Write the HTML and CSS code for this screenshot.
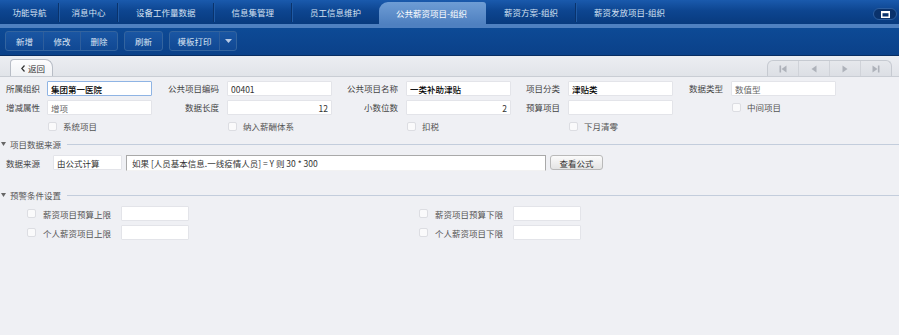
FILE: index.html
```html
<!DOCTYPE html>
<html lang="zh-CN">
<head>
    <meta charset="UTF-8">
    <title>公共薪资项目-组织</title>
    <link rel="stylesheet" href="styles.css">
</head>
<body>

    <!-- 顶部页签 -->
    <div class="tabbar">
        <div class="tabs">
            <div class="tab sm sep">功能导航</div>
            <div class="tab sm sep">消息中心</div>
            <div class="tab sep">设备工作量数据</div>
            <div class="tab sep">信息集管理</div>
            <div class="tab">员工信息维护</div>
            <div class="tab active">公共薪资项目-组织</div>
            <div class="tab sep">薪资方案-组织</div>
            <div class="tab">薪资发放项目-组织</div>
        </div>
        <div class="winbtn">
            <svg width="9" height="7" viewBox="0 0 9 7"><rect x="0.75" y="0.75" width="7.5" height="5.5" fill="none" stroke="#fff" stroke-width="1.5"/><rect x="0" y="0" width="9" height="2.2" fill="#fff"/></svg>
        </div>
    </div>

    <!-- 工具栏 -->
    <div class="toolbar">
        <div class="btngroup">
            <button class="tbtn">新增</button>
            <button class="tbtn">修改</button>
            <button class="tbtn">删除</button>
        </div>
        <div class="btngroup">
            <button class="tbtn">刷新</button>
        </div>
        <div class="btngroup">
            <button class="tbtn wide">模板打印</button>
            <button class="tbtn drop">
                <svg width="7" height="4" viewBox="0 0 7 4"><path d="M0 0h7L3.5 4z" fill="#b9cbe6"/></svg>
            </button>
        </div>
    </div>

    <!-- 返回 / 翻页 -->
    <div class="backbar">
        <div class="back">
            <svg width="4" height="7" viewBox="0 0 4 7"><path d="M3.5 0.5L0.8 3.5 3.5 6.5" fill="none" stroke="#333" stroke-width="1.2"/></svg>
            <span>返回</span>
        </div>
        <div class="pager">
            <div class="pg first">
                <svg width="8" height="8" viewBox="0 0 8 8"><rect x="0.5" y="0.5" width="1.6" height="7" fill="#aeb2ba"/><path d="M7.5 0.5v7L2.5 4z" fill="#aeb2ba"/></svg>
            </div>
            <div class="pg">
                <svg width="6" height="8" viewBox="0 0 6 8"><path d="M5.5 0.5v7L0.5 4z" fill="#aeb2ba"/></svg>
            </div>
            <div class="pg">
                <svg width="6" height="8" viewBox="0 0 6 8"><path d="M0.5 0.5v7L5.5 4z" fill="#aeb2ba"/></svg>
            </div>
            <div class="pg last">
                <svg width="8" height="8" viewBox="0 0 8 8"><path d="M0.5 0.5v7L5.5 4z" fill="#aeb2ba"/><rect x="5.9" y="0.5" width="1.6" height="7" fill="#aeb2ba"/></svg>
            </div>
        </div>
    </div>

    <div class="form">
        <!-- 基本信息 -->
        <div class="grid">
            <label class="lbl first">所属组织</label>
            <input class="txt focus strong" type="text" value="集团第一医院">
            <label class="lbl">公共项目编码</label>
            <input class="txt" type="text" value="00401">
            <label class="lbl">公共项目名称</label>
            <input class="txt strong" type="text" value="一类补助津贴">
            <label class="lbl">项目分类</label>
            <input class="txt strong" type="text" value="津贴类">
            <label class="lbl">数据类型</label>
            <input class="txt muted" type="text" value="数值型">

            <label class="lbl first">增减属性</label>
            <input class="txt muted" type="text" value="增项">
            <label class="lbl">数据长度</label>
            <input class="txt num" type="text" value="12">
            <label class="lbl">小数位数</label>
            <input class="txt num" type="text" value="2">
            <label class="lbl">预算项目</label>
            <input class="txt" type="text" value="">
            <span></span>
            <label class="chk"><span class="box"></span>中间项目</label>

            <span></span>
            <label class="chk"><span class="box"></span>系统项目</label>
            <span></span>
            <label class="chk"><span class="box"></span>纳入薪酬体系</label>
            <span></span>
            <label class="chk"><span class="box"></span>扣税</label>
            <span></span>
            <label class="chk"><span class="box"></span>下月清零</label>
        </div>

        <!-- 项目数据来源 -->
        <div class="sec">
            <svg width="5" height="4" viewBox="0 0 5 4"><path d="M0 0h5L2.5 4z" fill="#666"/></svg>
            <span class="sectitle">项目数据来源</span>
            <span class="secline"></span>
        </div>
        <div class="src">
            <label class="srclbl">数据来源</label>
            <input class="txt srctype" type="text" value="由公式计算">
            <input class="formula" type="text" value="如果 [人员基本信息.一线疫情人员] = Y 则 30 * 300">
            <button class="gbtn">查看公式</button>
        </div>

        <!-- 预警条件设置 -->
        <div class="sec sec2">
            <svg width="5" height="4" viewBox="0 0 5 4"><path d="M0 0h5L2.5 4z" fill="#666"/></svg>
            <span class="sectitle">预警条件设置</span>
            <span class="secline"></span>
        </div>
        <div class="warn">
            <div class="witem">
                <span class="box"></span>
                <span class="wlbl">薪资项目预算上限</span>
                <input class="txt wtxt" type="text">
            </div>
            <div class="witem">
                <span class="box"></span>
                <span class="wlbl">薪资项目预算下限</span>
                <input class="txt wtxt" type="text">
            </div>
        </div>
        <div class="warn">
            <div class="witem">
                <span class="box"></span>
                <span class="wlbl">个人薪资项目上限</span>
                <input class="txt wtxt" type="text">
            </div>
            <div class="witem">
                <span class="box"></span>
                <span class="wlbl">个人薪资项目下限</span>
                <input class="txt wtxt" type="text">
            </div>
        </div>
    </div>

</body>
</html>
```

FILE: styles.css
```css
body{
    margin: 0;
    background-color: #eff0f4;
    font-family: "Noto Sans CJK SC", "Noto Sans", sans-serif;
    font-size: 8.5px;
    color: #444;
}

/* 顶部页签 */
.tabbar{
    display: flex;
    justify-content: space-between;
    height: 24px;
    background: linear-gradient(#1a5aad, #0d4590 45%, #083a7e);
    border-bottom: 4px solid #4f80c0;
}

.tabs{
    display: flex;
    align-items: flex-end;
    height: 24px;
}

.tab{
    position: relative;
    padding: 0 18px;
    height: 24px;
    line-height: 24px;
    color: #d5e1f2;
    white-space: nowrap;
}

.tab.sm{
    padding: 0 12.5px;
}

.tab.sep::after{
    content: "";
    position: absolute;
    right: 0;
    top: 3px;
    bottom: 2px;
    width: 1px;
    background-color: #0a336c;
    box-shadow: 1px 0 0 #1f5aa5;
}

.tab.active{
    height: 22px;
    line-height: 22px;
    padding: 0 19px 0 17px;
    color: #fff;
    border-radius: 9px 3px 0 0;
    background: linear-gradient(#6e9dd5, #4f80c0);
}

.winbtn{
    display: flex;
    align-items: center;
    justify-content: center;
    box-sizing: border-box;
    width: 24px;
    height: 12px;
    margin: 8px 2px 0 0;
    border-radius: 6px;
    background-color: #0a326c;
    border: 1px solid #2d5e9f;
}

/* 工具栏 */
.toolbar{
    display: flex;
    align-items: flex-start;
    gap: 6px;
    height: 28px;
    box-sizing: border-box;
    padding: 3px 0 0 5px;
    background: linear-gradient(#0d4a96, #0b4189);
    border-bottom: 1px solid #082d62;
}

.btngroup{
    display: flex;
    height: 20px;
    box-sizing: border-box;
    border: 1px solid #33649f;
    border-radius: 3px;
    background: linear-gradient(#1a56a3, #104893);
    overflow: hidden;
}

.tbtn{
    width: 37px;
    height: 18px;
    padding: 0;
    border: none;
    background: none;
    color: #dce6f4;
    font-family: inherit;
    font-size: 8.5px;
    cursor: pointer;
}

.tbtn + .tbtn{
    border-left: 1px solid #2e5e9c;
}

.tbtn.wide{
    width: 49px;
}

.tbtn.drop{
    display: flex;
    align-items: center;
    justify-content: center;
    width: 17px;
}

/* 返回栏 */
.backbar{
    display: flex;
    justify-content: space-between;
    align-items: flex-end;
    height: 20px;
    padding: 0 7px 0 10px;
    background: linear-gradient(#eceef2, #e1e4e9);
    border-bottom: 1px solid #c9cdd4;
}

.back{
    display: flex;
    align-items: center;
    gap: 3px;
    box-sizing: border-box;
    width: 43px;
    height: 17px;
    padding-left: 10px;
    border: 1px solid #b8bdc6;
    border-bottom: none;
    border-radius: 4px 8px 0 0;
    background: linear-gradient(#fdfdfe, #eff1f4);
    color: #333;
    cursor: pointer;
}

.pager{
    display: flex;
    height: 16px;
    margin-bottom: 0;
    box-sizing: border-box;
    border: 1px solid #c6cad1;
    border-bottom: none;
    border-radius: 6px 6px 0 0;
    background: linear-gradient(#e6e8ec, #dcdfe5);
}

.pg{
    display: flex;
    align-items: center;
    justify-content: center;
    width: 30px;
}

.pg + .pg{
    border-left: 1px solid #d0d3d9;
}

/* 表单 */
.form{
    padding-top: 4px;
}

.grid{
    display: grid;
    grid-template-columns: 41px 105px 75px 105px 74px 105px 57px 105px 58px 105px;
    grid-auto-rows: 15px;
    row-gap: 4px;
    padding-left: 6px;
}

.lbl{
    line-height: 15px;
    text-align: right;
    padding-right: 8px;
    color: #444;
    white-space: nowrap;
}

.lbl.first{
    text-align: left;
    padding-right: 0;
}

.txt{
    box-sizing: border-box;
    height: 15px;
    margin: 0;
    padding: 0 3px;
    border: 1px solid #e3e4e9;
    border-radius: 1px;
    background-color: #fff;
    font-family: inherit;
    font-size: 8.5px;
    color: #333;
    outline: none;
}

.txt.focus{
    border-color: #8fb4e4;
}

.txt.strong{
    color: #000;
    font-weight: 500;
}

.txt.muted{
    color: #666;
}

.txt.num{
    text-align: right;
}

.chk{
    display: flex;
    align-items: center;
    line-height: 15px;
    color: #555;
    white-space: nowrap;
}

.box{
    display: inline-block;
    box-sizing: border-box;
    width: 9px;
    height: 9px;
    margin: 0 6px 0 1px;
    border: 1px solid #dcdde2;
    border-radius: 2px;
    background-color: #fafafb;
    flex: none;
}

/* 分组标题 */
.sec{
    display: flex;
    align-items: center;
    height: 12px;
    margin-top: 4px;
    padding-left: 1px;
}

.sec2{
    margin-top: 19px;
}

.sectitle{
    margin-left: 4px;
    color: #555;
}

.secline{
    flex: 1;
    height: 1px;
    margin-left: 6px;
    background-color: #c3cddc;
}

.src{
    display: flex;
    align-items: center;
    height: 15px;
    margin-top: 5px;
    padding-left: 6px;
}

.srclbl{
    width: 47px;
    color: #444;
}

.srctype{
    width: 69px;
}

.formula{
    box-sizing: border-box;
    width: 420px;
    height: 16px;
    margin: 0 0 0 4px;
    padding: 0 5px;
    border: 1px solid #a9a9a9;
    border-bottom-color: #f2f2f2;
    background-color: #fff;
    font-family: inherit;
    font-size: 8.5px;
    color: #333;
    outline: none;
}

.gbtn{
    box-sizing: border-box;
    width: 53px;
    height: 15px;
    margin-left: 4px;
    padding: 0;
    border: 1px solid #b9b9b9;
    border-radius: 3px;
    background: linear-gradient(#fbfbfb, #e4e4e4);
    font-family: inherit;
    font-size: 8.5px;
    color: #333;
    cursor: pointer;
}

.warn{
    display: flex;
    height: 15px;
    margin-top: 4px;
    padding-left: 27px;
}

.sec2 + .warn{
    margin-top: 5px;
}

.witem{
    display: flex;
    align-items: center;
    width: 392px;
}

.witem .box{
    margin: 0 7px 0 0;
}

.wlbl{
    width: 78px;
    color: #555;
    white-space: nowrap;
}

.wtxt{
    width: 68px;
}
```
